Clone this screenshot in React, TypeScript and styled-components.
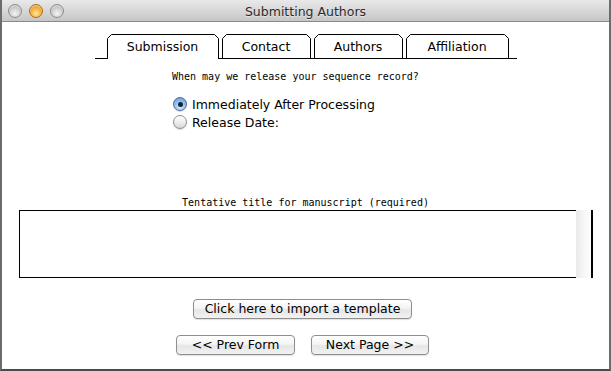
import styled, { createGlobalStyle } from 'styled-components';

const GlobalStyle = createGlobalStyle`
    html, body {
        margin: 0;
        padding: 0;
        background: #ffffff;
    }
    body {
        font-family: 'DejaVu Sans', 'Liberation Sans', sans-serif;
    }
`;

const tabs = [
    { label: 'Submission', width: 112, active: true },
    { label: 'Contact', width: 89, active: false },
    { label: 'Authors', width: 89, active: false },
    { label: 'Affiliation', width: 103, active: false },
];

const TabOutline = ({ width, active }: { width: number; active: boolean }) => {
    const h = active ? 25 : 24;
    const d = `M0.5 ${h} V4.5 L4.5 0.5 H${width - 4.5} L${width - 0.5} 4.5 V${h}`;
    return (
        <Outline width={width} height={h} viewBox={`0 0 ${width} ${h}`}>
            <path d={d} fill='#fff' stroke='#000' strokeWidth='1' />
        </Outline>
    );
};

const App = () => {
    return (
        <>
            <GlobalStyle />
            <Window>
                <TitleBar>
                    <Lights>
                        <Light />
                        <Light $color='orange' />
                        <Light />
                    </Lights>
                    <Title>Submitting Authors</Title>
                </TitleBar>
                <Content>
                    <TabRow>
                        {tabs.map((tab) => (
                            <Tab key={tab.label} $width={tab.width} $active={tab.active}>
                                <TabOutline width={tab.width} active={tab.active} />
                                <TabLabel>{tab.label}</TabLabel>
                            </Tab>
                        ))}
                    </TabRow>
                    <Question>
                        <Prompt>When may we release your sequence record?</Prompt>
                        <RadioList>
                            <RadioRow>
                                <Radio $checked />
                                <span>Immediately After Processing</span>
                            </RadioRow>
                            <RadioRow>
                                <Radio />
                                <span>Release Date:</span>
                            </RadioRow>
                        </RadioList>
                    </Question>
                    <FieldLabel>Tentative title for manuscript (required)</FieldLabel>
                    <TitleBox>
                        <TitleArea />
                        <ScrollTrack />
                    </TitleBox>
                    <ImportButton>Click here to import a template</ImportButton>
                    <NavRow>
                        <Button $width={119}>&lt;&lt; Prev Form</Button>
                        <Button $width={118}>Next Page &gt;&gt;</Button>
                    </NavRow>
                </Content>
            </Window>
        </>
    );
};

const Window = styled.div`
    width: 611px;
    height: 371px;
    box-sizing: border-box;
    border-left: 2px solid #6c6c6c;
    border-right: 2px solid #6c6c6c;
    border-bottom: 2px solid #4a4a4a;
    display: flex;
    flex-direction: column;
    background: #fff;
    overflow: hidden;
`;

const TitleBar = styled.header`
    height: 21px;
    border-bottom: 1px solid #8a8a8a;
    background: linear-gradient(to bottom, #e9e9e9 0%, #d6d6d6 55%, #c6c6c6 100%);
    display: grid;
    grid-template-columns: 1fr auto 1fr;
    align-items: center;
    margin: 0 -2px;
`;

const Lights = styled.div`
    display: flex;
    gap: 7px;
    padding-left: 8px;
    padding-top: 1px;
`;

const Light = styled.span<{ $color?: string }>`
    width: 14px;
    height: 14px;
    box-sizing: border-box;
    border-radius: 50%;
    border: 1px solid ${(p) => (p.$color === 'orange' ? '#a86e1c' : '#8c8c8c')};
    background: ${(p) =>
        p.$color === 'orange'
            ? 'radial-gradient(circle at 50% 70%, #ffe9a6 0%, #f7b543 45%, #d98a14 100%)'
            : 'radial-gradient(circle at 50% 70%, #f4f4f4 0%, #cfcfcf 50%, #a9a9a9 100%)'};
    box-shadow: inset 0 1px 1px rgba(255, 255, 255, 0.6);
`;

const Title = styled.div`
    font-size: 12.5px;
    color: #2b2b2b;
    text-shadow: 0 1px 0 rgba(255, 255, 255, 0.5);
    padding-top: 1px;
`;

const Content = styled.main`
    flex: 1;
    display: flex;
    flex-direction: column;
    align-items: center;
`;

const TabRow = styled.nav`
    margin-top: 12px;
    width: 410px;
    height: 24px;
    padding-left: 12px;
    border-bottom: 1px solid #000;
    display: flex;
    gap: 3px;
    align-items: flex-start;
`;

const Tab = styled.div<{ $width: number; $active: boolean }>`
    position: relative;
    z-index: ${(p) => (p.$active ? 1 : 0)};
    width: ${(p) => p.$width}px;
    height: ${(p) => (p.$active ? 25 : 24)}px;
    flex-shrink: 0;
`;

const Outline = styled.svg`
    position: absolute;
    left: 0;
    top: 0;
    display: block;
`;

const TabLabel = styled.span`
    position: relative;
    display: block;
    height: 24px;
    padding-top: 1px;
    box-sizing: border-box;
    line-height: 24px;
    text-align: center;
    font-size: 12.5px;
    color: #000;
`;

const Question = styled.section`
    align-self: stretch;
    padding-left: 170px;
    margin-top: 12px;
    display: flex;
    flex-direction: column;
`;

const Prompt = styled.div`
    font-family: 'DejaVu Sans Mono', 'Liberation Mono', monospace;
    font-size: 10px;
    line-height: 12px;
    color: #000;
`;

const RadioList = styled.div`
    margin-top: 12px;
    display: flex;
    flex-direction: column;
`;

const RadioRow = styled.label`
    height: 18px;
    display: flex;
    align-items: center;
    gap: 5px;
    padding-left: 1px;
    font-size: 12.5px;
    color: #000;
`;

const Radio = styled.span<{ $checked?: boolean }>`
    width: 14px;
    height: 14px;
    box-sizing: border-box;
    border-radius: 50%;
    display: flex;
    align-items: center;
    justify-content: center;
    border: 1px solid ${(p) => (p.$checked ? '#4f6e98' : '#8f8f8f')};
    background: ${(p) =>
        p.$checked
            ? 'radial-gradient(circle at 50% 75%, #d7ebff 0%, #8dbbeb 55%, #5e93d0 100%)'
            : 'linear-gradient(to bottom, #ffffff 0%, #eeeeee 50%, #d6d6d6 100%)'};
    box-shadow: 0 1px 1px rgba(0, 0, 0, 0.15);
    &::after {
        content: '';
        display: ${(p) => (p.$checked ? 'block' : 'none')};
        width: 5px;
        height: 5px;
        border-radius: 50%;
        background: #14213a;
    }
`;

const FieldLabel = styled.div`
    margin-top: 66px;
    font-family: 'DejaVu Sans Mono', 'Liberation Mono', monospace;
    font-size: 10px;
    line-height: 12px;
    color: #000;
`;

const TitleBox = styled.div`
    margin-top: 1px;
    width: 574px;
    height: 68px;
    display: flex;
`;

const TitleArea = styled.div`
    flex: 1;
    border: 1px solid #000;
    border-right: none;
    background: #fff;
`;

const ScrollTrack = styled.div`
    width: 15px;
    border-right: 2px solid #000;
    background: linear-gradient(to right, #e9e9e9 0%, #f6f6f6 50%, #fdfdfd 100%);
`;

const Button = styled.button<{ $width: number }>`
    width: ${(p) => p.$width}px;
    height: 20px;
    box-sizing: border-box;
    padding: 0;
    border: 1px solid #8e8e8e;
    border-radius: 4px;
    background: linear-gradient(to bottom, #ffffff 0%, #f4f4f4 45%, #e6e6e6 55%, #f2f2f2 100%);
    box-shadow: 0 1px 1px rgba(0, 0, 0, 0.12);
    font-family: 'DejaVu Sans', 'Liberation Sans', sans-serif;
    font-size: 12.5px;
    line-height: 18px;
    color: #000;
`;

const ImportButton = styled(Button).attrs({ $width: 219 })`
    margin-top: 21px;
    margin-right: 6px;
`;

const NavRow = styled.div`
    margin-top: 16px;
    margin-right: 6px;
    display: flex;
    gap: 16px;
`;

export default App;
